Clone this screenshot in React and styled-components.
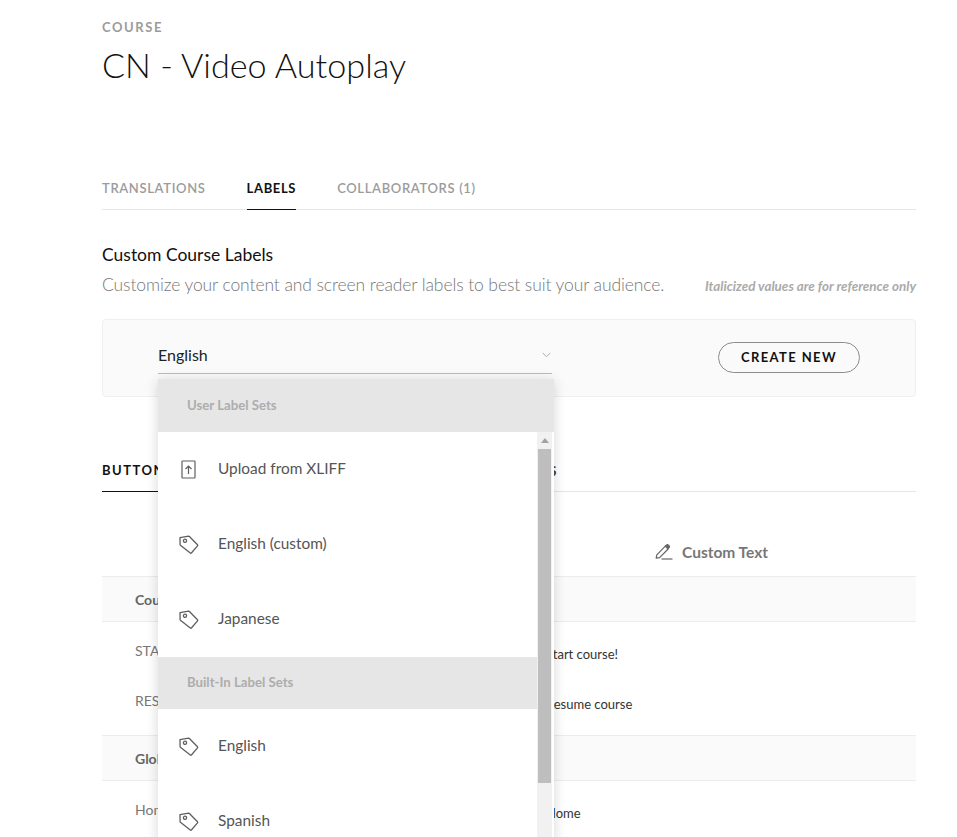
import React from "react";
import styled, { createGlobalStyle } from "styled-components";

const Global = createGlobalStyle`
  html, body { margin: 0; padding: 0; background: #fff; }
  body { font-family: Lato, "Liberation Sans", sans-serif; }
`;

const Page = styled.div`
  height: 837px;
  overflow: hidden;
  padding: 0 41px 0 102px;
  box-sizing: border-box;
`;
const Eyebrow = styled.div`
  padding-top: 20px;
  font-size: 13px;
  line-height: 15px;
  font-weight: 700;
  letter-spacing: 1.6px;
  color: #9b9b9b;
`;
const Title = styled.h1`
  margin: 8px 0 0;
  font-size: 34.2px;
  line-height: 44px;
  font-weight: 300;
  color: #111;
`;
const Tabs = styled.div`
  display: flex;
  height: ${(p) => p.$height}px;
  margin-top: ${(p) => p.$top}px;
  border-bottom: 1px solid #e6e6e6;
`;
const TabGroup = styled.div`
  display: flex;
  height: 100%;
  width: ${(p) => (p.$width ? `${p.$width}px` : "auto")};
  gap: ${(p) => p.$gap || 0}px;
  justify-content: ${(p) => (p.$width ? "space-between" : "flex-start")};
`;
const Tab = styled.div`
  height: 100%;
  display: flex;
  align-items: center;
  box-sizing: border-box;
  padding: ${(p) => p.$pad || 0};
  font-size: 13px;
  font-weight: ${(p) => (p.$bold ? 700 : 600)};
  letter-spacing: ${(p) => p.$spacing}px;
  white-space: nowrap;
  color: ${(p) => (p.$active ? "#111" : p.$dark ? "#333" : "#9b9b9b")};
  ${(p) => p.$active && "border-bottom: 1px solid #111; margin-bottom: -1px; height: calc(100% + 1px);"}
`;
const Heading = styled.h2`
  margin: 34px 0 0;
  font-size: 17.5px;
  line-height: 22px;
  font-weight: 400;
  color: #111;
`;
const DescRow = styled.div`
  display: flex;
  justify-content: space-between;
  align-items: center;
  margin-top: 8px;
`;
const Desc = styled.p`
  margin: 0;
  font-size: 17.5px;
  line-height: 22px;
  font-weight: 300;
  letter-spacing: -0.1px;
  color: #777;
`;
const Note = styled.span`
  padding-top: 2px;
  font-size: 13.4px;
  font-weight: 700;
  font-style: italic;
  color: #aaa;
`;
const Panel = styled.div`
  margin-top: 23px;
  height: 78px;
  box-sizing: border-box;
  border: 1px solid #efefef;
  border-radius: 4px;
  background: #fafafa;
  display: flex;
  align-items: flex-start;
  padding: 21px 55px 0 55px;
`;
const SelectWrap = styled.div`
  position: relative;
  width: 394px;
  flex: none;
`;
const SelectField = styled.div`
  display: flex;
  justify-content: space-between;
  align-items: center;
  box-sizing: border-box;
  height: 33px;
  padding: 0 1px 5px 0;
  border-bottom: 1px solid #bbb;
  font-size: 16px;
  color: #222;
`;
const Menu = styled.div`
  position: absolute;
  top: 38px;
  left: 0;
  width: 396px;
  height: 470px;
  background: #fff;
  box-shadow: 0 2px 12px rgba(0, 0, 0, 0.16);
  display: flex;
  flex-direction: column;
  z-index: 5;
`;
const GroupHeader = styled.div`
  flex: none;
  height: ${(p) => p.$height}px;
  box-sizing: border-box;
  background: #e6e6e6;
  display: flex;
  align-items: center;
  padding: 0 0 2px 29px;
  font-size: 13.2px;
  font-weight: 700;
  color: #adadad;
`;
const MenuBody = styled.div`
  flex: 1;
  display: flex;
  min-height: 0;
`;
const MenuList = styled.div`
  width: 379px;
  flex: none;
`;
const MenuItem = styled.div`
  height: 75px;
  box-sizing: border-box;
  padding: 0 0 3px 20px;
  display: flex;
  align-items: center;
  gap: 19px;
  font-size: 15.4px;
  color: #555;
`;
const IconSlot = styled.span`
  width: 21px;
  padding-top: 3px;
  display: flex;
  justify-content: center;
  flex: none;
  color: #5f5f5f;
`;
const Track = styled.div`
  width: 15px;
  margin-right: 2px;
  background: #f1f1f1;
  padding-top: 6px;
  display: flex;
  flex-direction: column;
  align-items: center;
  flex: none;
  box-sizing: border-box;
`;
const Arrow = styled.div`
  width: 0;
  height: 0;
  border-left: 4px solid transparent;
  border-right: 4px solid transparent;
  border-bottom: 5px solid #a3a3a3;
`;
const Thumb = styled.div`
  width: 13px;
  height: 334px;
  margin-top: 6px;
  background: #bebebe;
`;
const CreateButton = styled.button`
  margin-left: 166px;
  margin-top: 1px;
  width: 142px;
  height: 31px;
  flex: none;
  box-sizing: border-box;
  border: 1px solid #8c8c8c;
  border-radius: 16px;
  background: transparent;
  font-family: inherit;
  font-size: 13px;
  font-weight: 700;
  letter-spacing: 1.4px;
  color: #111;
  padding: 0 0 2px;
`;
const TableHead = styled.div`
  height: 84px;
  display: flex;
  align-items: center;
  padding: 36px 0 0 553px;
  box-sizing: border-box;
  gap: 9px;
  font-size: 15.5px;
  font-weight: 700;
  color: #777;
`;
const Section = styled.div`
  height: 44px;
  display: flex;
  align-items: center;
  padding-left: 33px;
  background: #fafafa;
  border-top: 1px solid #ececec;
  border-bottom: 1px solid #ececec;
  font-size: 14px;
  font-weight: 700;
  color: #666;
`;
const RowGroup = styled.div`
  padding: ${(p) => p.$pad};
`;
const Row = styled.div`
  display: grid;
  grid-template-columns: 411px 1fr;
  height: 50px;
  align-items: center;
  padding-left: 33px;
  font-size: 14px;
  color: #777;
`;
const Custom = styled.span`
  position: relative;
  top: 4px;
  font-size: 13px;
  color: #333;
`;

const UploadIcon = () => (
  <svg width="15" height="19" viewBox="0 0 15 19" fill="none" stroke="currentColor">
    <rect x="1" y="1" width="13" height="17" rx="0.5" strokeWidth="1.2" />
    <path d="M7.500 14V6M4.500 9l3-3 3 3" strokeWidth="1.2" />
  </svg>
);
const TagIcon = () => (
  <svg width="20" height="20" viewBox="0 0 20 20" fill="none" stroke="currentColor" strokeWidth="1.3">
    <path d="M1 2.600 9.600 1.200a1 1 0 0 1 .8.3l8.100 8.300a.8.8 0 0 1 0 1.100l-6.100 7.100a.8.8 0 0 1-1.100 0L1.400 10.300a1 1 0 0 1-.3-.7Z" strokeLinejoin="round" />
    <circle cx="6" cy="5.800" r="1.600" />
  </svg>
);
const Chevron = () => (
  <svg width="9" height="6" viewBox="0 0 9 6" fill="none" stroke="#b0b0b0" strokeWidth="1">
    <path d="M.7.800 4.500 4.800 8.300.800" />
  </svg>
);
const PencilIcon = () => (
  <svg width="18" height="16" viewBox="0 0 18 16" fill="none" stroke="#666" strokeWidth="1.2">
    <path d="M1.200 14.200 1.800 10.800 10.300 2.200l2.800 2.800-8.500 8.600Z" strokeLinejoin="round" />
    <path d="M10.600 1.800 11.700.9a1 1 0 0 1 1.500 0l1 1a1 1 0 0 1 0 1.500l-1 1Z" fill="#666" />
    <path d="M6.500 15h11" />
  </svg>
);

export default function App() {
  return (
    <Page>
      <Global />
      <Eyebrow>COURSE</Eyebrow>
      <Title>CN - Video Autoplay</Title>
      <Tabs $height={41} $top={81}>
        <TabGroup $gap={41}>
          <Tab $spacing={0.65} $pad="0 0 2px">TRANSLATIONS</Tab>
          <Tab $active $bold $spacing={0.65} $pad="0 0 2px">LABELS</Tab>
          <Tab $spacing={0.65} $pad="0 0 2px">COLLABORATORS (1)</Tab>
        </TabGroup>
      </Tabs>
      <Heading>Custom Course Labels</Heading>
      <DescRow>
        <Desc>Customize your content and screen reader labels to best suit your audience.</Desc>
        <Note>Italicized values are for reference only</Note>
      </DescRow>
      <Panel>
        <SelectWrap>
          <SelectField>
            English
            <Chevron />
          </SelectField>
          <Menu>
            <GroupHeader $height={53}>User Label Sets</GroupHeader>
            <MenuBody>
              <MenuList>
                <MenuItem><IconSlot><UploadIcon /></IconSlot>Upload from XLIFF</MenuItem>
                <MenuItem><IconSlot><TagIcon /></IconSlot>English (custom)</MenuItem>
                <MenuItem><IconSlot><TagIcon /></IconSlot>Japanese</MenuItem>
                <GroupHeader $height={52}>Built-In Label Sets</GroupHeader>
                <MenuItem><IconSlot><TagIcon /></IconSlot>English</MenuItem>
                <MenuItem><IconSlot><TagIcon /></IconSlot>Spanish</MenuItem>
              </MenuList>
              <Track>
                <Arrow />
                <Thumb />
              </Track>
            </MenuBody>
          </Menu>
        </SelectWrap>
        <CreateButton>CREATE NEW</CreateButton>
      </Panel>
      <Tabs $height={43} $top={51}>
        <TabGroup $width={456}>
          <Tab $active $bold $dark $spacing={1.5}>BUTTONS</Tab>
          <Tab $bold $dark $spacing={1.5} $pad="2px 0 0">NAVIGATION</Tab>
          <Tab $bold $dark $spacing={1.5} $pad="2px 0 0">ACCESS LABELS</Tab>
        </TabGroup>
      </Tabs>
      <TableHead>
        <PencilIcon />
        Custom Text
      </TableHead>
      <Section>Course</Section>
      <RowGroup $pad="3px 0 10px">
        <Row>START COURSE<Custom>Start course!</Custom></Row>
        <Row>RESUME COURSE<Custom>Resume course</Custom></Row>
      </RowGroup>
      <Section>Global</Section>
      <RowGroup $pad="3px 0 0">
        <Row>Home<Custom>Home</Custom></Row>
      </RowGroup>
    </Page>
  );
}
